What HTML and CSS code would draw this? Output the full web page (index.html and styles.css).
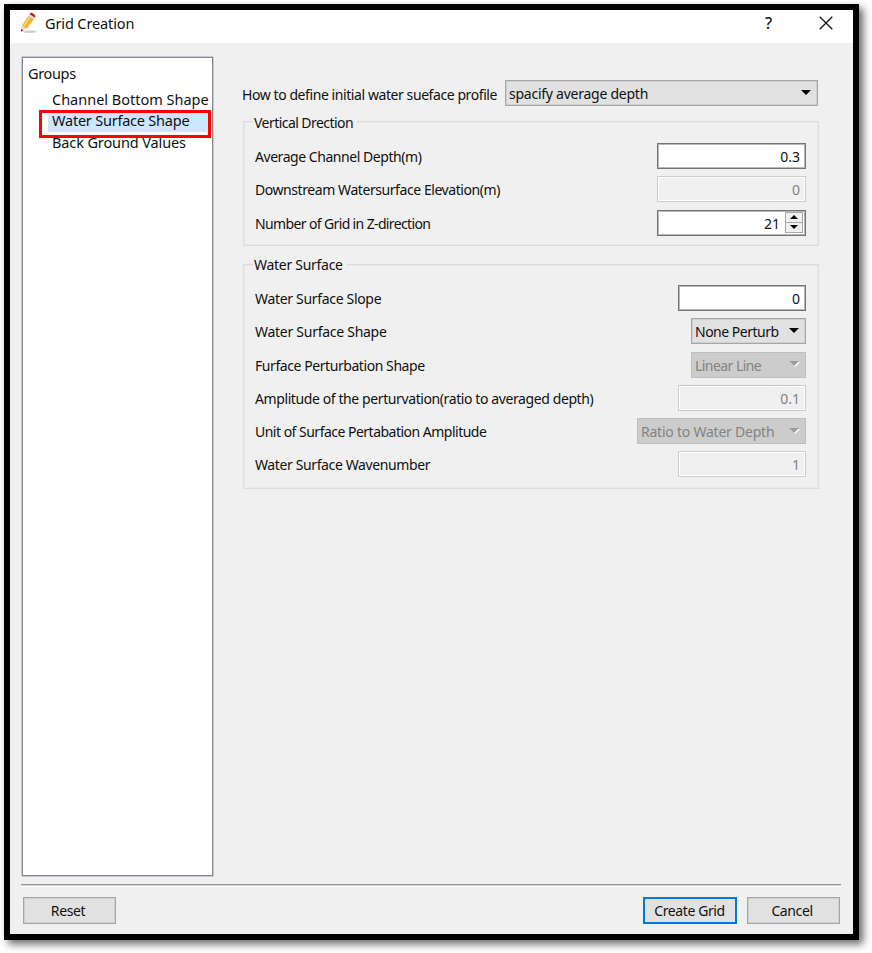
FILE: index.html
```html
<!DOCTYPE html>
<html lang="en">
<head>
<meta charset="utf-8">
<title>Grid Creation</title>
<link rel="stylesheet" href="styles.css">
</head>
<body>
<main class="dialog">
  <header class="titlebar">
    <svg class="pencil" width="18" height="22" viewBox="0 0 18 22">
      <ellipse cx="9.5" cy="19.6" rx="7.5" ry="1.3" fill="#cfcfcf"/>
      <path d="M.8 19.6 2 13.3 6.8 16.7Z" fill="#ead7b0"/>
      <path d="M2 13.3 8.6 3.7 14 7.2 6.8 16.7Z" fill="#efb33a"/>
      <path d="M3.7 13.8 10 4.8" stroke="#ffd873" stroke-width="1.4"/>
      <path d="M8.6 3.7 9.6 2.2 15 5.8 14 7.2Z" fill="#ddd"/>
      <path d="M9.6 2.2Q10.8 0 13.2 1.4 16.2 3.4 15 5.8Z" fill="#b5202c"/>
      <path d="M.8 19.6 1.3 17 3.2 18.4Z" fill="#222"/>
    </svg>
    <h1 class="title">Grid Creation</h1>
    <span class="help">?</span>
    <svg class="close" width="14" height="14" viewBox="0 0 14 14"><path d="M.7.7 13.3 13.3M13.3.7.7 13.3" stroke="#111" stroke-width="1.3"/></svg>
  </header>
  <div class="content">
    <nav class="groups">
      <div class="groups-head">Groups</div>
      <div class="item i1">Channel Bottom Shape</div>
      <div class="item i2 selected">Water Surface Shape</div>
      <div class="item i3">Back Ground Values</div>
      <div class="highlight"></div>
    </nav>
    <section class="form">
      <div class="profile">
        <label class="t-profile">How to define initial water sueface profile</label>
        <div class="combo w313"><span class="t-spacify">spacify average depth</span><i class="arrow"></i></div>
      </div>
      <div class="box vertical">
        <div class="legend t-vert">Vertical Drection</div>
        <div class="row"><label class="t-avg">Average Channel Depth(m)</label><div class="field w148">0.3</div></div>
        <div class="row"><label class="t-down">Downstream Watersurface Elevation(m)</label><div class="field w148 off">0</div></div>
        <div class="row"><label class="t-num">Number of Grid in Z-direction</label><div class="field w148 spin">21<span class="steps"><i class="step up"></i><i class="step down"></i></span></div></div>
      </div>
      <div class="box surface">
        <div class="legend t-ws">Water Surface</div>
        <div class="row"><label class="t-slope">Water Surface Slope</label><div class="field w128">0</div></div>
        <div class="row"><label class="t-shape">Water Surface Shape</label><div class="combo w115"><span class="t-none">None Perturb</span><i class="arrow"></i></div></div>
        <div class="row"><label class="t-fur">Furface Perturbation Shape</label><div class="combo w115 off"><span class="t-lin">Linear Line</span><i class="arrow"></i></div></div>
        <div class="row"><label class="t-amp">Amplitude of the perturvation(ratio to averaged depth)</label><div class="field w128 off">0.1</div></div>
        <div class="row"><label class="t-unit">Unit of Surface Pertabation Amplitude</label><div class="combo w169 off"><span class="t-ratio">Ratio to Water Depth</span><i class="arrow"></i></div></div>
        <div class="row"><label class="t-wave">Water Surface Wavenumber</label><div class="field w128 off">1</div></div>
      </div>
    </section>
  </div>
  <footer class="actions">
    <button class="btn reset">Reset</button>
    <button class="btn primary">Create Grid</button>
    <button class="btn cancel">Cancel</button>
  </footer>
</main>
</body>
</html>
```
FILE: styles.css
```css
* { box-sizing: border-box; }
body { margin: 0; padding: 4px; height: 953px; background: #fff; color: #111; font: 14px/20px "Noto Sans", sans-serif; letter-spacing: -0.35px; overflow: hidden; }
.dialog { width: 855px; height: 936px; border: 6px solid #000; background: #f0f0f0; display: flex; flex-direction: column; box-shadow: 4px 4px 8px rgba(0,0,0,.6); }

/* Title bar */
.titlebar { height: 33px; flex: none; background: #fff; display: flex; align-items: center; padding: 0 20px 6px 10px; }
.pencil { margin-top: -1px; }
.title { margin: -2px auto 0 7px; font-size: 14.5px; font-weight: 400; letter-spacing: -.12px; }
.help { font-size: 16px; width: 8px; font-weight: 500; margin-top: -2px; }
.close { margin-left: 46px; margin-top: -1px; }

/* Group list */
.content { display: flex; height: 842px; padding: 14px 0 0 1px; border-bottom: 1px solid #999; box-shadow: 0 1px #d0d0d0, 0 2px #fff; width: 820px; margin-left: 11px; flex: none; }
.groups { position: relative; width: 191px; height: 819px; background: #fff; border: 1px solid #828790; box-shadow: 0 0 0 .5px #a0a4ab; padding-top: 4px; font-size: 14.5px; flex: none; }
.groups-head { padding-left: 5px; height: 26px; line-height: 22px; }
.item { height: 22px; line-height: 22px; margin-left: 25px; padding-left: 4px; white-space: nowrap; }
.i1 { letter-spacing: -.01px; }
.i2 { letter-spacing: -.22px; }
.i3 { letter-spacing: -.12px; line-height: 20px; }
.selected { background: #cce8ff; line-height: 21px; }
.highlight { position: absolute; left: 16px; top: 52px; width: 172px; height: 28px; border: 3px solid #f00; }

/* Form */
.form { padding: 23px 0 0 30px; width: 606px; flex: none; }
.profile { display: flex; justify-content: space-between; align-items: center; height: 26px; width: 575px; }
.profile label { padding-top: 3px; }
label { white-space: nowrap; padding-top: 2px; }
.box { border: 1px solid #dcdcdc; box-shadow: inset 0 0 0 1px #e9e9e9; width: 576px; }
.vertical { margin-top: 15px; height: 125px; }
.surface { margin-top: 18px; height: 225px; }
.legend { width: max-content; margin: -11px 0 11px 9px; padding: 0 4px 0 1px; height: 21px; line-height: 23px; background: #f0f0f0; }
.surface .legend { margin-bottom: 10px; line-height: 21px; }
.row { display: flex; justify-content: space-between; align-items: center; height: 26px; margin: 0 12px 7.3px 11px; }

.combo { height: 26px; border: 1px solid #a6a6a6; box-shadow: inset 0 0 0 1px #cfcfcf; background: #e1e1e1; display: flex; align-items: center; justify-content: space-between; padding: 2px 6px 0 3px; white-space: nowrap; flex: none; }
.field { height: 26px; border: 1px solid #747474; box-shadow: inset 0 0 0 1px #b8b8b8; background: #fff; padding: 3px 5px 0 0; text-align: right; flex: none; letter-spacing: 0; }
.w313 { width: 313px; }
.w169 { width: 169px; }
.w148 { width: 149px; }
.w128 { width: 128px; }
.w115 { width: 115px; }
.off { color: #838383; }
.combo.off { background: #ccc; border-color: #bfbfbf; box-shadow: none; }
.field.off { background: #f0f0f0; border-color: #ccc; box-shadow: inset 0 0 0 1px #fff; }
.arrow { border: 5px solid transparent; border-top-color: #000; border-bottom: 0; margin-top: -4px; }
.off .arrow { border-top-color: #9c9c9c; filter: drop-shadow(1px 1px 0 #fff); }
.spin { display: flex; justify-content: flex-end; padding: 3px 2px 0 0; }
.steps { width: 18px; height: 21px; margin: -2px 0 0 5px; border: 1px solid #aaa; display: flex; flex-direction: column; background: #f0f0f0; }
.step { flex: 1; display: flex; align-items: center; justify-content: center; }
.step + .step { border-top: 1px solid #aaa; }
.step::before { content: ""; border: 4px solid transparent; }
.up::before { border-top: 0; border-bottom-color: #000; }
.down::before { border-bottom: 0; border-top-color: #000; }

.t-profile { letter-spacing: -.42px; margin-left: -1px; }
.t-vert { letter-spacing: -.55px; }
.t-avg { letter-spacing: -.45px; }
.t-down { letter-spacing: -.43px; }
.t-num { letter-spacing: -.63px; }
.t-ws { letter-spacing: -.28px; }
.t-slope { letter-spacing: -.32px; }
.t-shape { letter-spacing: -.27px; }
.t-fur { letter-spacing: -.43px; }
.t-amp { letter-spacing: -.4px; }
.t-unit { letter-spacing: -.51px; }
.t-wave { letter-spacing: -.38px; }
.t-spacify { letter-spacing: -.25px; }
.t-none { letter-spacing: -.5px; }
.t-lin { letter-spacing: -.55px; }
.t-ratio { letter-spacing: -.23px; }

/* Buttons */
.actions { display: flex; padding: 12px 13px 0; }
.btn { width: 93px; height: 27px; padding: 1px 3px 0 0; background: #e1e1e1; border: 1px solid #a6a6a6; box-shadow: inset 0 0 0 1px #cfcfcf; font: inherit; letter-spacing: -.4px; color: #111; }
.reset { margin-right: auto; }
.primary { border: 2px solid #0078d7; box-shadow: none; margin-right: 10px; width: 94px; padding-right: 1px; }
```
